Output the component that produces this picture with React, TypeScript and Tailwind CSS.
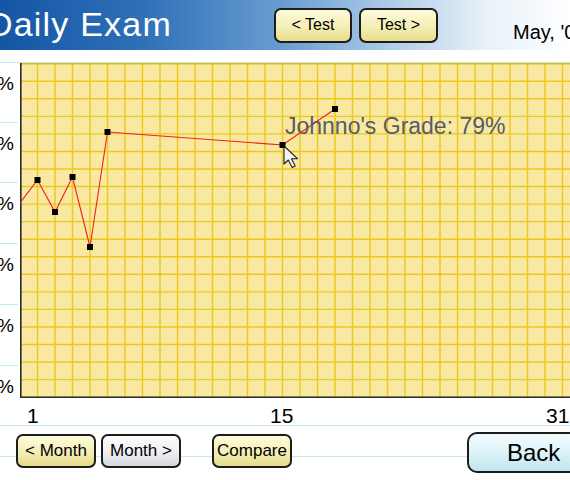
import React from "react"

const points: [number, number][] = [
  [0, 140],
  [17.5, 117],
  [35, 149],
  [52.5, 114],
  [70, 184],
  [87.5, 69],
  [262.5, 82],
  [315, 46],
]

const yLabels = ["90%", "80%", "70%", "60%", "50%", "40%"]
const rowHeights = ["h-[60px]", "h-[60px]", "h-[61px]", "h-[61px]", "h-[61px]", "h-[59px]"]

function YellowButton({ children, className = "" }: { children: React.ReactNode; className?: string }) {
  return (
    <button
      className={
        "flex shrink-0 items-center justify-center rounded-[7px] border-2 border-[#1c1c1c] bg-[linear-gradient(to_bottom,#fefcdc,#f3eeb4_55%,#e6dc8c)] text-black " +
        className
      }
    >
      {children}
    </button>
  )
}

function Chart() {
  const w = 550
  const h = 335
  const step = 17.5
  const cols = Array.from({ length: Math.ceil(w / step) + 1 }, (_, i) => i * step)
  const rows = Array.from({ length: 20 }, (_, i) => i * 17.55)

  return (
    <svg width={w} height={h} className="block">
      <rect x={0} y={0} width={w} height={h} fill="#f9e8a2" />
      {cols.map((x) => (
        <line key={"c" + x} x1={x} y1={0} x2={x} y2={h} stroke="#ebc91c" strokeWidth={1.4} />
      ))}
      {rows.map((y, i) => (
        <line
          key={"r" + i}
          x1={0}
          y1={y + 0.7}
          x2={w}
          y2={y + 0.7}
          stroke={i === 0 ? "#dfbc18" : "#ebc91c"}
          strokeWidth={i === 0 ? 1.8 : 1.4}
        />
      ))}
      <line x1={0.8} y1={0} x2={0.8} y2={h} stroke="#2a2a2a" strokeWidth={1.6} />
      <line x1={0} y1={h - 0.8} x2={w} y2={h - 0.8} stroke="#2a2a2a" strokeWidth={1.6} />
      <polyline
        points={points.map((p) => p.join(",")).join(" ")}
        fill="none"
        stroke="#f21d1d"
        strokeWidth={1.1}
      />
      {points.slice(1).map(([x, y]) => (
        <rect key={x} x={x - 3} y={y - 3} width={6} height={6} fill="#000" />
      ))}
      {/* mouse pointer */}
      <path
        d="M264 83 L264 101 L268.3 97 L272.2 104.5 L275.2 103.1 L271.5 95.8 L277.4 95.6 Z"
        fill="#f4f4f4"
        stroke="#1e1e1e"
        strokeWidth={1.1}
        strokeLinejoin="round"
      />
    </svg>
  )
}

export default function App() {
  return (
    <div className="h-[480px] w-[570px] overflow-hidden bg-white font-['Liberation_Sans',Arial,sans-serif] text-black">
      {/* Header */}
      <header className="flex h-[50px] items-center bg-[linear-gradient(to_right,#1456a4_0%,#2f70b8_25%,#6a9ed1_50%,#b4cfe9_70%,#e8f0f9_85%,#ffffff_100%)]">
        <h1 className="ml-[-12px] w-[286px] shrink-0 pb-[2px] text-[34px] leading-none tracking-[1.2px] text-white">
          Daily Exam
        </h1>
        <div className="flex shrink-0 gap-[7px]">
          <YellowButton className="h-[35px] w-[78px] text-[16px]">&lt; Test</YellowButton>
          <YellowButton className="h-[35px] w-[79px] text-[16px]">Test &gt;</YellowButton>
        </div>
        <span className="ml-[75px] mt-[14px] shrink-0 whitespace-nowrap text-[20px] leading-none">May, '08</span>
      </header>

      <div className="h-[13px] border-b border-[#c6e8f1]" />

      {/* Chart area */}
      <div className="flex h-[363px] border-b border-[#c6e8f1]">
        <div className="flex w-[20px] shrink-0 flex-col">
          {yLabels.map((label, i) => (
            <div
              key={label}
              className={
                "flex w-[18px] justify-end pr-[4px] pt-[11px] " +
                rowHeights[i] +
                (i < 5 ? " border-b border-[#c6e8f1]" : "")
              }
            >
              <span className="whitespace-nowrap text-[19px] leading-[19px]">{label}</span>
            </div>
          ))}
        </div>

        <div className="flex flex-1 flex-col">
          <div className="relative h-[335px]">
            <Chart />
            <div className="absolute left-[265px] top-[52px] whitespace-nowrap text-[23px] leading-none text-[#565b69]">
              Johnno's Grade: 79%
            </div>
          </div>
          <div className="relative h-[27px] text-[21px] leading-none">
            <span className="absolute left-[7px] top-[7px]">1</span>
            <span className="absolute left-[250px] top-[7px]">15</span>
            <span className="absolute left-[526px] top-[7px]">31</span>
          </div>
        </div>
      </div>

      {/* Bottom buttons */}
      <div className="flex h-[54px] items-start bg-[linear-gradient(to_bottom,transparent_30px,#c6e8f1_30px,#c6e8f1_31px,transparent_31px)] pl-[16px] pt-[8px]">
        <YellowButton className="h-[34px] w-[80px] text-[17px]">&lt; Month</YellowButton>
        <button className="ml-[5px] flex h-[34px] w-[80px] shrink-0 items-center justify-center rounded-[7px] border-2 border-[#1c1c1c] bg-[linear-gradient(to_bottom,#fdfdfd,#eeeef2_55%,#d6d6de)] text-[17px]">
          Month &gt;
        </button>
        <YellowButton className="ml-[31px] h-[34px] w-[80px] text-[17px]">Compare</YellowButton>
        <button className="ml-[175px] mt-[-2px] flex h-[41px] w-[130px] shrink-0 items-center rounded-[10px] border-2 border-[#1c1c1c] bg-[linear-gradient(to_bottom,#f4fcfe,#dcf3f8_50%,#bfe5ee)] pl-[38px] text-[24px]">
          Back
        </button>
      </div>
    </div>
  )
}
